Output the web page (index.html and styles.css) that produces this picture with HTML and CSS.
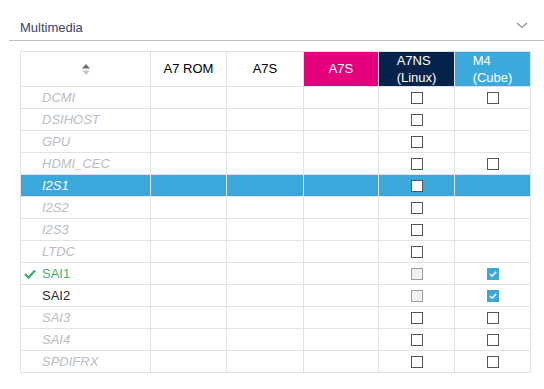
FILE: index.html
```html
<!DOCTYPE html>
<html>
<head>
<meta name="viewport" content="width=device-width, initial-scale=1">
<title>Multimedia</title>
<link rel="stylesheet" href="styles.css">
</head>
<body>

<div class="section-head">
  <span class="section-title">Multimedia</span>
  <svg class="chevron" width="12" height="7" viewBox="0 0 12 7"><path d="M1 1 L6 5.5 L11 1" fill="none" stroke="#8a9098" stroke-width="1.2"/></svg>
</div>

<table class="grid">
  <colgroup>
    <col class="c-name"><col class="c-rom"><col class="c-a7s"><col class="c-a7s2"><col class="c-a7ns"><col class="c-m4">
  </colgroup>
  <thead>
    <tr>
      <th>
        <svg class="sort" width="8" height="11" viewBox="0 0 8 11"><path d="M4 0 L8 4.5 L0 4.5 Z" fill="#6b6f75"/><path d="M0 6.5 L8 6.5 L4 11 Z" fill="#c4c7cc"/></svg>
      </th>
      <th>A7 ROM</th>
      <th>A7S</th>
      <th class="h-pink">A7S</th>
      <th class="h-navy"><span class="two">A7NS<br>(Linux)</span></th>
      <th class="h-blue"><span class="two">M4<br>(Cube)</span></th>
    </tr>
  </thead>
  <tbody>
    <tr><td class="name off">DCMI</td><td></td><td></td><td></td><td><span class="box"></span></td><td><span class="box"></span></td></tr>
    <tr><td class="name off">DSIHOST</td><td></td><td></td><td></td><td><span class="box"></span></td><td></td></tr>
    <tr><td class="name off">GPU</td><td></td><td></td><td></td><td><span class="box"></span></td><td></td></tr>
    <tr><td class="name off">HDMI_CEC</td><td></td><td></td><td></td><td><span class="box"></span></td><td><span class="box"></span></td></tr>
    <tr class="selected"><td class="name off">I2S1</td><td></td><td></td><td></td><td><span class="box"></span></td><td></td></tr>
    <tr><td class="name off">I2S2</td><td></td><td></td><td></td><td><span class="box"></span></td><td></td></tr>
    <tr><td class="name off">I2S3</td><td></td><td></td><td></td><td><span class="box"></span></td><td></td></tr>
    <tr><td class="name off">LTDC</td><td></td><td></td><td></td><td><span class="box"></span></td><td></td></tr>
    <tr><td class="name on"><svg class="tick" width="12" height="10" viewBox="0 0 12 10"><path d="M1 5 L4.5 8.5 L11 1.5" fill="none" stroke="#3fae73" stroke-width="2.4"/></svg>SAI1</td><td></td><td></td><td></td><td><span class="box disabled"></span></td><td><span class="box checked"><svg width="10" height="10" viewBox="0 0 10 10"><path d="M2 5 L4.2 7.2 L8.2 2.8" fill="none" stroke="#fff" stroke-width="1.4"/></svg></span></td></tr>
    <tr><td class="name used">SAI2</td><td></td><td></td><td></td><td><span class="box disabled"></span></td><td><span class="box checked"><svg width="10" height="10" viewBox="0 0 10 10"><path d="M2 5 L4.2 7.2 L8.2 2.8" fill="none" stroke="#fff" stroke-width="1.4"/></svg></span></td></tr>
    <tr><td class="name off">SAI3</td><td></td><td></td><td></td><td><span class="box"></span></td><td><span class="box"></span></td></tr>
    <tr><td class="name off">SAI4</td><td></td><td></td><td></td><td><span class="box"></span></td><td><span class="box"></span></td></tr>
    <tr><td class="name off">SPDIFRX</td><td></td><td></td><td></td><td><span class="box"></span></td><td><span class="box"></span></td></tr>
  </tbody>
</table>

</body>
</html>
```

FILE: styles.css
```css
* {box-sizing: border-box}
body {
  margin: 0;
  background-color: #fff;
  font-family: "Liberation Sans", Arial, sans-serif;
  font-size: 13px;
}
.section-head {
  display: flex;
  align-items: center;
  justify-content: space-between;
  margin: 14px 0 0 9px;
  padding: 0 16px 0 11px;
  height: 27px;
  border-bottom: 1px solid #b9c2ca;
}
.section-title {
  color: #39456b;
  font-size: 13px;
  margin-top: 1px;
}
.chevron {
  margin-top: -4px;
}
.grid {
  border-collapse: collapse;
  margin: 10px 0 0 20px;
  width: 510px;
  table-layout: fixed;
}
.c-name {width: 130px}
.c-rom {width: 76px}
.c-a7s {width: 77px}
.c-a7s2 {width: 75px}
.c-a7ns {width: 76px}
.c-m4 {width: 76px}
.grid th,
.grid td {
  border: 1px solid #dfe2e6;
  padding: 0;
}
.grid th {
  height: 35px;
  font-weight: normal;
  color: #000;
  text-align: center;
  vertical-align: middle;
  line-height: 16px;
}
.sort {
  display: block;
  margin: 0 auto;
}
.h-pink {
  background-color: #e6007e;
  color: #fff !important;
}
.h-navy {
  background-color: #03234b;
  color: #fff !important;
}
.h-blue {
  background-color: #3ba9dc;
  color: #fff !important;
}
.two {
  display: inline-block;
  text-align: left;
  line-height: 17px;
}
.grid td {
  height: 22px;
  text-align: center;
  vertical-align: middle;
  line-height: 14px;
}
.grid td.name {
  text-align: left;
  padding-left: 21px;
  position: relative;
}
.off {
  color: #b9bdc4;
  font-style: italic;
}
.on {
  color: #3fae73;
}
.used {
  color: #2b2b2b;
}
.tick {
  position: absolute;
  left: 3px;
  top: 6px;
}
.selected td {
  background-color: #3aa8db;
}
.selected td.name {
  color: #fff;
}
.box {
  display: inline-block;
  width: 12px;
  height: 12px;
  border: 1px solid #555;
  background-color: #fff;
  vertical-align: middle;
  position: relative;
}
.box.disabled {
  border-color: #9a9ea4;
  background-color: #f0f1f3;
}
.box.checked {
  border-color: #3aa8db;
  background-color: #3aa8db;
}
.box svg {
  position: absolute;
  left: 0;
  top: 0;
}
```
